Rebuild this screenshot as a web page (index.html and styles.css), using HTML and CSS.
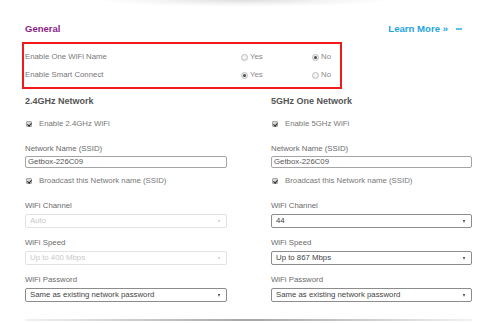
FILE: index.html
```html
<!DOCTYPE html>
<html lang="en">
<head>
<meta charset="utf-8">
<title>WiFi Settings</title>
<link rel="stylesheet" href="styles.css">
</head>
<body>
<div class="page">
  <div class="top-shadow"></div>

  <div class="general-head">
    <h2 class="general-title">General</h2>
    <div class="learn">
      <a class="learn-link">Learn More »</a>
      <span class="collapse"></span>
    </div>
  </div>

  <div class="general-box">
    <div class="grow">
      <span class="glabel">Enable One WiFi Name</span>
      <span class="radio"><span class="rb"></span>Yes</span>
      <span class="radio"><span class="rb on"></span>No</span>
    </div>
    <div class="grow">
      <span class="glabel">Enable Smart Connect</span>
      <span class="radio"><span class="rb on"></span>Yes</span>
      <span class="radio"><span class="rb"></span>No</span>
    </div>
  </div>

  <div class="columns">
    <section class="col">
      <h3 class="col-title">2.4GHz Network</h3>
      <div class="check"><span class="cb"></span>Enable 2.4GHz WiFi</div>
      <div class="field-label ssid-label">Network Name (SSID)</div>
      <div class="input">Getbox-226C09</div>
      <div class="check broadcast"><span class="cb"></span>Broadcast this Network name (SSID)</div>
      <div class="field first">
        <div class="field-label">WiFi Channel</div>
        <div class="select disabled"><span>Auto</span><span class="arrow"></span></div>
      </div>
      <div class="field">
        <div class="field-label">WiFi Speed</div>
        <div class="select disabled"><span>Up to 400 Mbps</span><span class="arrow"></span></div>
      </div>
      <div class="field">
        <div class="field-label">WiFi Password</div>
        <div class="select"><span>Same as existing network password</span><span class="arrow"></span></div>
      </div>
    </section>

    <section class="col">
      <h3 class="col-title">5GHz One Network</h3>
      <div class="check"><span class="cb"></span>Enable 5GHz WiFi</div>
      <div class="field-label ssid-label">Network Name (SSID)</div>
      <div class="input">Getbox-226C09</div>
      <div class="check broadcast"><span class="cb"></span>Broadcast this Network name (SSID)</div>
      <div class="field first">
        <div class="field-label">WiFi Channel</div>
        <div class="select"><span>44</span><span class="arrow"></span></div>
      </div>
      <div class="field">
        <div class="field-label">WiFi Speed</div>
        <div class="select"><span>Up to 867 Mbps</span><span class="arrow"></span></div>
      </div>
      <div class="field">
        <div class="field-label">WiFi Password</div>
        <div class="select"><span>Same as existing network password</span><span class="arrow"></span></div>
      </div>
    </section>
  </div>

  <div class="bottom-line"></div>
</div>
</body>
</html>
```

FILE: styles.css
```css
html, body {
  margin: 0;
  padding: 0;
  background: #fff;
}

body {
  font-family: "Liberation Sans", Arial, sans-serif;
  font-size: 7.8px;
  color: #777;
}

.page {
  width: 488px;
  height: 323px;
  overflow: hidden;
}

.top-shadow {
  width: 300px;
  height: 7px;
  margin: 0 auto;
  background: radial-gradient(ellipse 50% 100% at 50% 0, rgba(0,0,0,0.13), rgba(0,0,0,0.04) 60%, rgba(0,0,0,0) 100%);
}

.general-head {
  margin-top: 16px;
  height: 12px;
  padding: 0 26px 0 25px;
  display: flex;
  justify-content: space-between;
  align-items: center;
}

.general-title {
  margin: 0;
  font-size: 9.5px;
  line-height: 12px;
  font-weight: bold;
  color: #8b1e84;
}

.learn {
  display: flex;
  align-items: center;
}

.learn-link {
  font-size: 9.6px;
  line-height: 12px;
  font-weight: bold;
  color: #1fa6e0;
}

.collapse {
  width: 6px;
  height: 1.5px;
  margin-left: 8px;
  background: #5fc0ec;
}

.general-box {
  margin: 10px 0 0 25px;
  width: 314px;
  padding: 3px 0 2px;
  outline: 2px solid #f01a1a;
  outline-offset: 1px;
}

.grow {
  display: grid;
  grid-template-columns: 216px 71px 1fr;
  height: 18px;
  align-items: center;
  line-height: 12px;
}

.glabel {
  color: #777;
}

.radio {
  display: flex;
  align-items: center;
  color: #888;
}

.rb {
  width: 7px;
  height: 7px;
  box-sizing: border-box;
  border-radius: 50%;
  border: 1px solid #bdbdbd;
  background: radial-gradient(circle at 50% 40%, #fdfdfd, #e0e0e0);
  margin-right: 2px;
  display: flex;
  align-items: center;
  justify-content: center;
}

.rb.on::after {
  content: "";
  width: 3px;
  height: 3px;
  border-radius: 50%;
  background: #4a4a4a;
}

.columns {
  margin-top: 9px;
  padding: 0 16px 0 25px;
  display: grid;
  grid-template-columns: 202px 201px;
  column-gap: 44px;
}

.col-title {
  margin: 0;
  font-size: 9px;
  line-height: 12px;
  font-weight: bold;
  color: #555;
}

.check {
  margin-top: 11px;
  line-height: 12px;
  display: flex;
  align-items: center;
  color: #777;
}

.check.broadcast {
  margin-top: 7px;
}

.cb {
  width: 6px;
  height: 6px;
  box-sizing: border-box;
  margin: 0 7px 0 1px;
  background: #d6d6d6;
  border: 1px solid #a8a8a8;
  border-radius: 1px;
  display: flex;
  justify-content: center;
}

.cb::after {
  content: "";
  width: 1.5px;
  height: 3px;
  margin-top: -0.5px;
  border-right: 1.2px solid #222;
  border-bottom: 1.2px solid #222;
  transform: rotate(40deg);
}

.field-label {
  line-height: 12px;
  color: #6a6a6a;
}

.ssid-label {
  margin-top: 13px;
}

.input {
  margin-top: 1px;
  height: 12px;
  box-sizing: border-box;
  border: 1px solid #a5a5a5;
  border-radius: 2px;
  padding-left: 2px;
  line-height: 10px;
  color: #555;
}

.field {
  margin-top: 9px;
}

.field.first {
  margin-top: 13px;
}

.select {
  margin-top: 2px;
  height: 14px;
  box-sizing: border-box;
  border: 1px solid #8c8c8c;
  border-radius: 2px;
  padding: 0 6px 0 4px;
  display: flex;
  align-items: center;
  justify-content: space-between;
  line-height: 12px;
  color: #444;
}

.select.disabled {
  border-color: #e2e2e2;
  color: #c9c9c9;
}

.arrow {
  width: 0;
  height: 0;
  border-left: 1.5px solid transparent;
  border-right: 1.5px solid transparent;
  border-top: 3px solid #333;
}

.select.disabled .arrow {
  border-top-color: #c4c4c4;
}

.bottom-line {
  margin: 17px 16px 0 25px;
  height: 2px;
  background: linear-gradient(to right, #f2f2f2, #a6a6a6 50%, #f2f2f2);
}
```
